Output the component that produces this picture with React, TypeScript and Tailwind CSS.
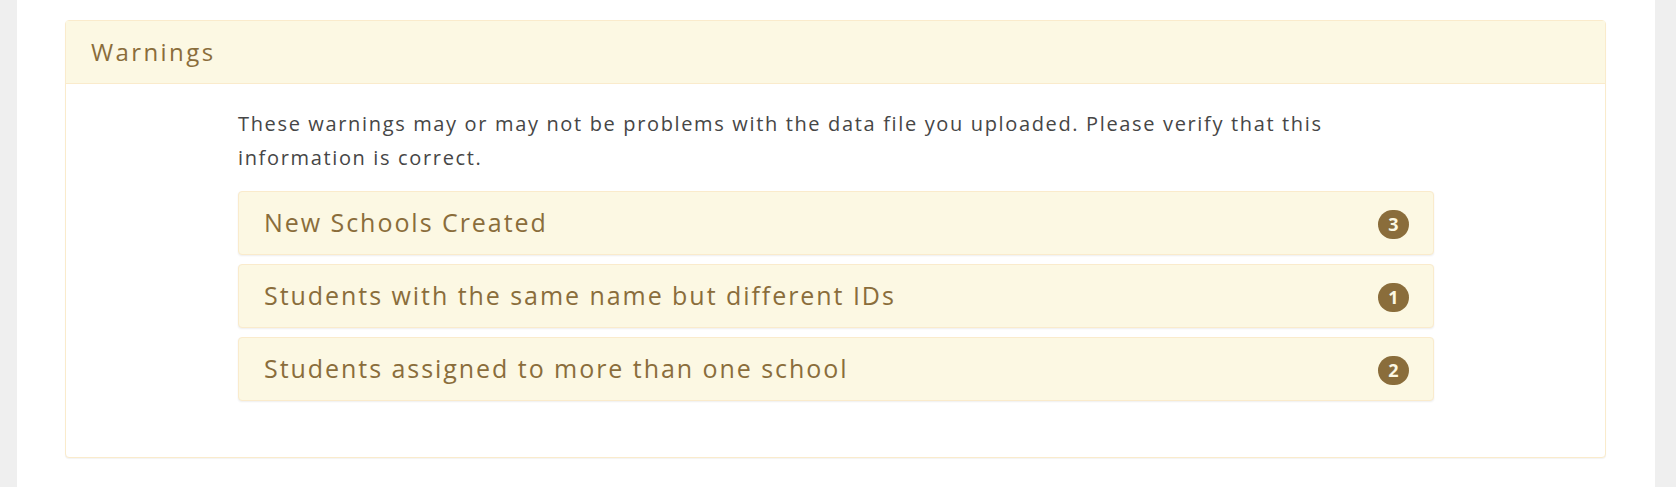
import React from "react";

const items = [
  { title: "New Schools Created", count: 3 },
  { title: "Students with the same name but different IDs", count: 1 },
  { title: "Students assigned to more than one school", count: 2 },
];

export default function App() {
  return (
    <div className="flex min-h-[487px] w-full bg-white font-['Open_Sans',sans-serif]">
      <div className="w-[17px] shrink-0 bg-[#efefef]" />
      <main className="flex-1 pl-[48px] pr-[49px] pt-[20px]">
        <section className="rounded-[4px] border border-[#faebcc] bg-white shadow-[0_1px_1px_rgba(0,0,0,0.05)]">
          <header className="flex h-[63px] items-center border-b border-[#faebcc] bg-[#fcf8e3] pl-[25px] text-[24px] tracking-[2.4px] text-[#8a6d3b]">
            Warnings
          </header>
          <div className="pl-[172px] pr-[171px] pt-[23px] pb-[56px]">
            <p className="text-[20px] leading-[34px] tracking-[1.65px] text-[#464646]">
              These warnings may or may not be problems with the data file you uploaded. Please verify that this information is correct.
            </p>
            <div className="mt-[16px] flex flex-col gap-[9px]">
              {items.map((it) => (
                <div
                  key={it.title}
                  className="flex h-[64px] items-center justify-between rounded-[4px] border border-[#faebcc] bg-[#fcf8e3] pl-[25px] pr-[24px] shadow-[0_1px_2px_rgba(0,0,0,0.07)]"
                >
                  <span className="text-[25px] tracking-[1.95px] text-[#8a6d3b]">{it.title}</span>
                  <span className="mt-[2px] flex h-[29px] min-w-[31px] items-center justify-center rounded-full bg-[#8a6d3b] px-[10px] text-[18px] font-bold text-[#fcf8e3]">
                    {it.count}
                  </span>
                </div>
              ))}
            </div>
          </div>
        </section>
      </main>
      <div className="w-[21px] shrink-0 bg-[#efefef]" />
    </div>
  );
}
